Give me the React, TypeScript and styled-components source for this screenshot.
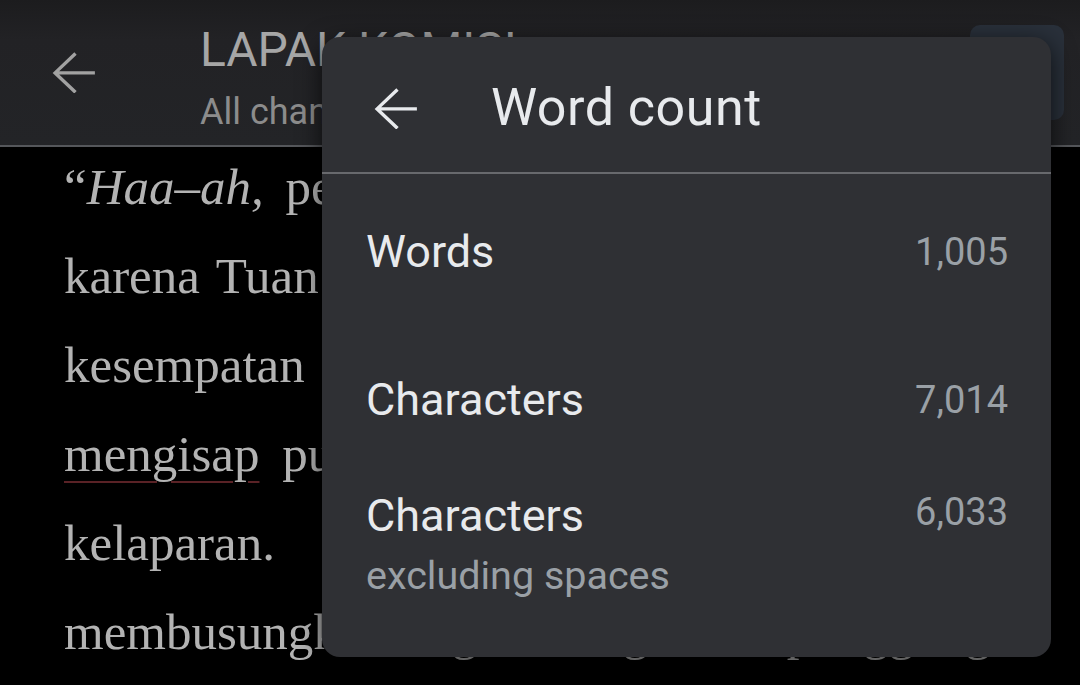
import styled, { createGlobalStyle } from "styled-components";

const GlobalStyle = createGlobalStyle`
	html, body {
		margin: 0;
		padding: 0;
		background: #000;
	}
	* {
		box-sizing: border-box;
	}
`;

const Screen = styled.div`
	position: relative;
	width: 1080px;
	height: 685px;
	overflow: hidden;
	background: #000;
	font-family: Roboto, "Liberation Sans", sans-serif;
`;

const AppBar = styled.header`
	display: flex;
	align-items: center;
	height: 147px;
	padding: 0 16px 0 52px;
	background: linear-gradient(#1c1c1e 0px, #222225 40px, #232427 100%);
	border-bottom: 2px solid #55575b;
`;

const BarBack = styled.div`
	display: flex;
	width: 148px;
	color: #a2a2a2;
`;

const TitleBlock = styled.div`
	display: flex;
	flex-direction: column;
	gap: 13px;
	flex: 1;
	margin-top: 9px;
`;

const DocTitle = styled.div`
	font-size: 48px;
	line-height: 56px;
	color: #a6a6a6;
	white-space: nowrap;
`;

const DocSubtitle = styled.div`
	font-size: 36px;
	line-height: 42px;
	color: #8c8c8c;
	white-space: nowrap;
`;

const ActionBox = styled.div`
	width: 94px;
	height: 95px;
	border-radius: 10px;
	background: #29303a;
`;

const Page = styled.main`
	margin-top: -4px;
	padding: 0 64px;
	font-family: "Liberation Serif", "Times New Roman", serif;
	font-size: 51px;
	line-height: 89px;
	color: #b3b3b3;
`;

const Line = styled.div<{ $gap?: number }>`
	white-space: nowrap;
	word-spacing: ${(p) => p.$gap ?? 0}px;
`;

const Misspelled = styled.span`
	text-decoration: underline;
	text-decoration-color: #5a2226;
	text-decoration-thickness: 2px;
	text-underline-offset: 10px;
`;

const Dialog = styled.section`
	position: absolute;
	left: 322px;
	top: 37px;
	width: 729px;
	height: 620px;
	border-radius: 18px;
	background: #2f3034;
	box-shadow: 0 6px 24px rgba(0, 0, 0, 0.7);
	overflow: hidden;
`;

const DialogHeader = styled.div`
	display: flex;
	align-items: center;
	height: 137px;
	padding: 6px 0 0 52px;
	color: #e8eaed;
	border-bottom: 2px solid #68696d;
`;

const DialogBack = styled.div`
	display: flex;
	width: 117px;
	margin-top: 2px;
`;

const DialogTitle = styled.h2`
	margin: 0;
	font-weight: 400;
	font-size: 52px;
	letter-spacing: 0.5px;
	color: #e8eaed;
`;

const StatRow = styled.div<{ $height: number; $top?: boolean }>`
	display: flex;
	justify-content: space-between;
	align-items: ${(p) => (p.$top ? "flex-start" : "center")};
	height: ${(p) => p.$height}px;
	padding: ${(p) => (p.$top ? "20px" : "0")} 43px 0 44px;
`;

const StatLabel = styled.div`
	display: flex;
	flex-direction: column;
	gap: 10px;
`;

const LabelText = styled.span`
	font-size: 45px;
	line-height: 52px;
	color: #e8eaed;
`;

const LabelHint = styled.span`
	font-size: 39.5px;
	line-height: 48px;
	color: #9aa0a6;
`;

const StatValue = styled.span<{ $shift?: number }>`
	font-size: 38px;
	line-height: 52px;
	color: #9aa0a6;
	margin-top: ${(p) => p.$shift ?? 0}px;
`;

function BackArrow({ size = 44, stroke = 3.4 }: { size?: number; stroke?: number }) {
	return (
		<svg width={size} height={size * 0.95} viewBox="0 0 44 42" fill="none">
			<path d="M43 21H3M23.5 1.5L3 21l20.5 19.5" stroke="currentColor" strokeWidth={stroke} strokeLinejoin="miter" />
		</svg>
	);
}

const stats = [
	{ label: "Words", value: "1,005", height: 155 },
	{ label: "Characters", value: "7,014", height: 141 },
];

export default function App() {
	return (
		<>
			<GlobalStyle />
			<Screen>
				<AppBar>
					<BarBack>
						<BackArrow />
					</BarBack>
					<TitleBlock>
						<DocTitle>LAPAK KOMISI</DocTitle>
						<DocSubtitle>All changes saved</DocSubtitle>
					</TitleBlock>
					<ActionBox />
				</AppBar>

				<Page>
					<Line $gap={9}>
						“<i>Haa–ah,</i> perutku lapar lagi,” keluhnya
					</Line>
					<Line $gap={4}>karena Tuan Muda belum juga datang</Line>
					<Line $gap={4}>kesempatan itu ia pakai untuk tidur dan</Line>
					<Line $gap={10}>
						<Misspelled>mengisap</Misspelled> punggung jarinya menahan
					</Line>
					<Line>kelaparan.</Line>
					<Line $gap={4}>membusungkan dagu, ia tegakkan punggung</Line>
				</Page>

				<Dialog>
					<DialogHeader>
						<DialogBack>
							<BackArrow />
						</DialogBack>
						<DialogTitle>Word count</DialogTitle>
					</DialogHeader>
					{stats.map((s) => (
						<StatRow key={s.label} $height={s.height}>
							<LabelText>{s.label}</LabelText>
							<StatValue>{s.value}</StatValue>
						</StatRow>
					))}
					<StatRow $height={188} $top>
						<StatLabel>
							<LabelText>Characters</LabelText>
							<LabelHint>excluding spaces</LabelHint>
						</StatLabel>
						<StatValue $shift={-4}>6,033</StatValue>
					</StatRow>
				</Dialog>
			</Screen>
		</>
	);
}
